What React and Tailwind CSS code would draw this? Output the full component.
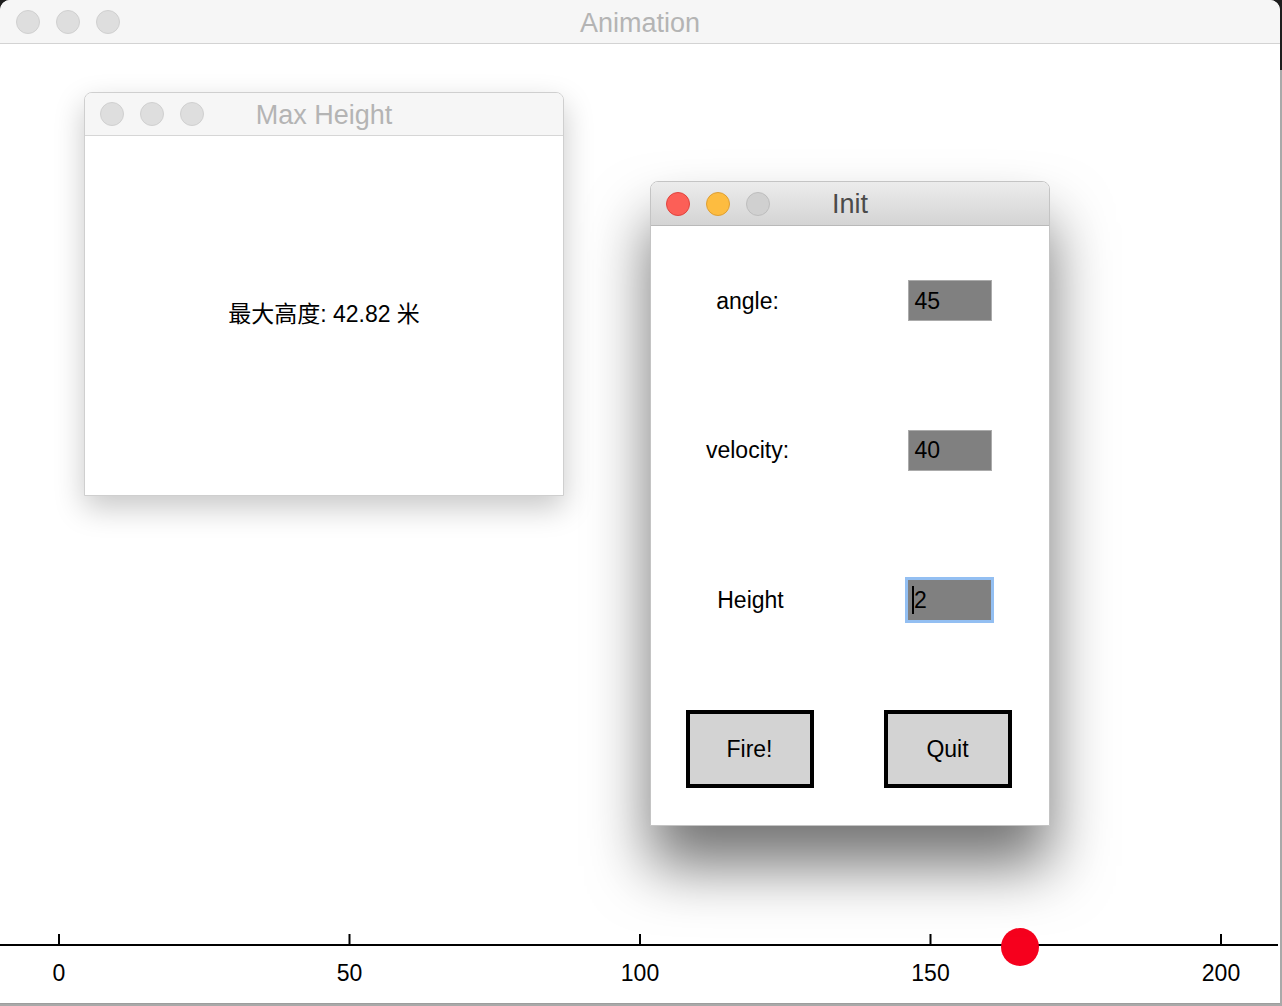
import React from "react";

const ticks = [0, 50, 100, 150, 200];

function Lights({ active }) {
  if (active) {
    return (
      <div className="flex items-center gap-[16px]">
        <div className="w-[24px] h-[24px] rounded-full bg-[#fc5f57] border border-[#e0443e]" />
        <div className="w-[24px] h-[24px] rounded-full bg-[#fdbc40] border border-[#de9f34]" />
        <div className="w-[24px] h-[24px] rounded-full bg-[#d0d0d0] border border-[#bdbdbd]" />
      </div>
    );
  }
  return (
    <div className="flex items-center gap-[16px]">
      <div className="w-[24px] h-[24px] rounded-full bg-[#dedede] border border-[#d0d0d0]" />
      <div className="w-[24px] h-[24px] rounded-full bg-[#dedede] border border-[#d0d0d0]" />
      <div className="w-[24px] h-[24px] rounded-full bg-[#dedede] border border-[#d0d0d0]" />
    </div>
  );
}

function Field({ value, focused }) {
  if (focused) {
    return (
      <div className="w-[89px] h-[46px] border-[3px] border-[#93bff2] bg-[#808080] flex items-center pl-[4px] text-[23px] text-black">
        <span className="w-[2px] h-[28px] bg-black" />
        <span>{value}</span>
      </div>
    );
  }
  return (
    <div className="w-[84px] h-[41px] border border-[#ababab] bg-[#808080] flex items-center pl-[6px] text-[23px] text-black">
      {value}
    </div>
  );
}

export default function App() {
  return (
    <div
      className="w-[1282px] h-[1006px] overflow-hidden bg-[linear-gradient(to_bottom,#1e1e1e_0px,#1e1e1e_70px,#a9a9a9_70px)]"
      style={{ fontFamily: '"Liberation Sans", Arial, "Noto Sans CJK SC", sans-serif' }}
    >
      <div className="w-[1280px] h-[1004px] bg-white rounded-t-[10px] flex flex-col border-b border-[#9d9d9d]">
        {/* title bar */}
        <div className="relative h-[44px] shrink-0 bg-[#f6f6f6] border-b border-[#d3d3d3] rounded-t-[10px] flex items-center pl-[16px]">
          <Lights />
          <div className="absolute inset-0 flex items-center justify-center pt-[3px] text-[27px] text-[#b4b4b4] pointer-events-none">
            Animation
          </div>
        </div>

        {/* content */}
        <div className="relative flex-1 flex flex-col">
          {/* Max Height window */}
          <div className="absolute left-[84px] top-[48px] w-[480px] h-[404px] bg-white rounded-t-[8px] border border-[#cfcfcf] shadow-[0_12px_30px_rgba(0,0,0,0.22)] flex flex-col overflow-hidden">
            <div className="relative h-[43px] shrink-0 bg-[#f6f6f6] border-b border-[#d6d6d6] flex items-center pl-[15px]">
              <Lights />
              <div className="absolute inset-0 flex items-center justify-center pt-[2px] text-[27px] text-[#b4b4b4]">
                Max Height
              </div>
            </div>
            <div className="flex-1 flex items-center justify-center pb-[3px] text-[23px] text-black">
              最大高度: 42.82 米
            </div>
          </div>

          {/* Init window */}
          <div className="absolute left-[650px] top-[137px] w-[400px] h-[645px] bg-white rounded-t-[8px] border border-[#c4c4c4] shadow-[0_40px_60px_rgba(0,0,0,0.55)] flex flex-col overflow-hidden">
            <div className="relative h-[44px] shrink-0 bg-[linear-gradient(to_bottom,#ececec,#d4d4d4)] border-b border-[#b9b9b9] flex items-center pl-[15px]">
              <Lights active />
              <div className="absolute inset-0 flex items-center justify-center pt-[2px] text-[27px] text-[#4b4b4b]">
                Init
              </div>
            </div>
            <div className="flex-1 grid grid-cols-2 grid-rows-4 text-[23px] text-black">
              <div className="flex items-center justify-center pr-[6px]">angle:</div>
              <div className="flex items-center justify-center">
                <Field value="45" />
              </div>
              <div className="flex items-center justify-center pr-[6px]">velocity:</div>
              <div className="flex items-center justify-center">
                <Field value="40" />
              </div>
              <div className="flex items-center justify-center">Height</div>
              <div className="flex items-center justify-center">
                <Field value="2" focused />
              </div>
              <div className="flex items-center justify-center pb-[2px] pr-[2px]">
                <button className="w-[128px] h-[78px] border-4 border-black bg-[#d3d3d3] text-[23px] text-black">
                  Fire!
                </button>
              </div>
              <div className="flex items-center justify-center pb-[2px] pr-[4px]">
                <button className="w-[128px] h-[78px] border-4 border-black bg-[#d3d3d3] text-[23px] text-black">
                  Quit
                </button>
              </div>
            </div>
          </div>

          <div className="flex-1" />

          {/* axis */}
          <svg width="1280" height="80" className="block shrink-0">
            <rect x="0" y="21" width="1278" height="2" fill="#000" />
            {ticks.map((t, i) => {
              const x = 59 + i * 290.5;
              return (
                <g key={t}>
                  <rect x={x - 1} y="11" width="2" height="11" fill="#000" />
                  <text
                    x={x}
                    y="58"
                    textAnchor="middle"
                    fontSize="23"
                    fill="#000"
                    fontFamily='"Liberation Sans", Arial, sans-serif'
                  >
                    {t}
                  </text>
                </g>
              );
            })}
            <circle cx="1020" cy="24" r="19" fill="#f6001d" />
          </svg>
        </div>
      </div>
    </div>
  );
}
